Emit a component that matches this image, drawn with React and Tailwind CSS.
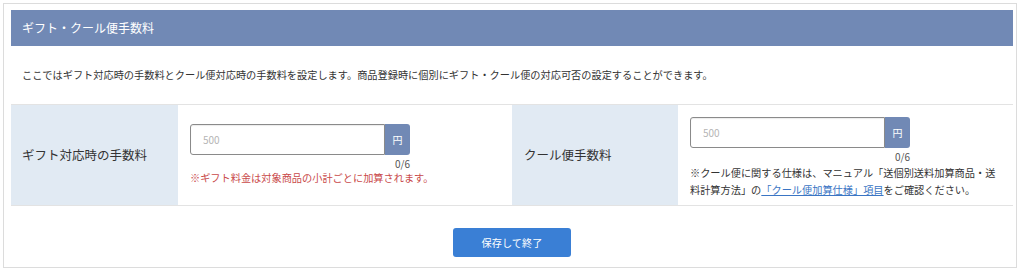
const FONT = { fontFamily: '"Noto Sans CJK JP", "Noto Sans", sans-serif' };

function YenInput() {
  return (
    <div className="flex">
      <input
        type="text"
        placeholder="500"
        className="w-[195px] h-[31px] border border-[#8a8a8a] rounded-l-[3px] px-3 text-[10px] text-[#333] placeholder-[#b5b5b5] outline-none shadow-[inset_0_1px_1px_rgba(0,0,0,0.08)]"
      />
      <span className="w-[25px] h-[31px] bg-[#7189b5] text-white text-[10px] rounded-r-[3px] flex items-center justify-center">
        円
      </span>
    </div>
  );
}

export default function App() {
  return (
    <div className="w-[1024px] h-[271px] bg-white pt-[3px] pl-[3px]" style={FONT}>
      <div className="w-[1014px] h-[265px] border border-[#dcdcdc] pt-[6px] pl-[7px] pr-[3px]">
        <div className="h-[36px] bg-[#7189b5] text-white text-[12px] flex items-center pl-[11px]">
          ギフト・クール便手数料
        </div>
        <div className="h-[59px] flex items-center pl-[11px] text-[10.2px] text-[#333] border-b border-[#e3e3e3]">
          ここではギフト対応時の手数料とクール便対応時の手数料を設定します。商品登録時に個別にギフト・クール便の対応可否の設定することができます。
        </div>

        <div className="grid grid-cols-[167px_334px_166px_334px] h-[101px] border-b border-[#e3e3e3]">
          <div className="bg-[#e1eaf3] flex items-center pl-[11px] text-[12.5px] text-[#333]">
            ギフト対応時の手数料
          </div>
          <div className="pl-[12px] pt-[19px]">
            <YenInput />
            <div className="w-[220px] text-right text-[10px] text-[#555] leading-[14px] mt-[2px]">0/6</div>
            <p className="text-[10.2px] text-[#c94a4a] leading-[14px]">
              ※ギフト料金は対象商品の小計ごとに加算されます。
            </p>
          </div>
          <div className="bg-[#e1eaf3] flex items-center pl-[12px] text-[12.5px] text-[#333]">
            クール便手数料
          </div>
          <div className="pl-[12px] pr-[10px] pt-[12px] bg-white">
            <YenInput />
            <div className="w-[220px] text-right text-[10px] text-[#555] leading-[14px] mt-[2px]">0/6</div>
            <p className="text-[10.2px] text-[#333] leading-[17px] w-[310px]">
              ※クール便に関する仕様は、マニュアル「送個別送料加算商品・送料計算方法」の
              <a href="#" className="text-[#3a75c4] underline">「クール便加算仕様」項目</a>
              をご確認ください。
            </p>
          </div>
        </div>

        <div className="flex justify-center pt-[22px]">
          <button className="w-[118px] h-[29px] bg-[#3a7fd5] text-white text-[10.2px] rounded-[3px]">
            保存して終了
          </button>
        </div>
      </div>
    </div>
  );
}
